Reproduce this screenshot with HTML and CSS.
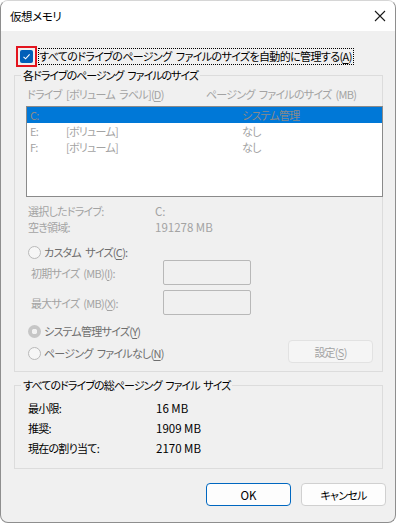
FILE: index.html
```html
<!DOCTYPE html>
<html lang="ja">
<head>
<meta charset="utf-8">
<title>仮想メモリ</title>
<link rel="stylesheet" href="styles.css">
</head>
<body>
<div class="window">
  <div class="titlebar">
    <span class="title">仮想メモリ</span>
    <svg class="close" width="12" height="12" viewBox="0 0 12 12"><path d="M1 1 L11 11 M11 1 L1 11" stroke="#1a1a1a" stroke-width="1.1" fill="none"/></svg>
  </div>
  <div class="content">
    <div class="auto-row">
      <span class="highlight"><span class="checkbox"><svg width="13" height="13" viewBox="0 0 13 13"><path d="M3.5 6.8 L5.6 8.8 L9.6 4.4" stroke="#fff" stroke-width="1.1" fill="none"/></svg></span></span>
      <span class="focus-label">すべてのドライブのページング ファイルのサイズを自動的に管理する(<u>A</u>)</span>
    </div>

    <div class="group g1">
      <div class="group-title">各ドライブのページング ファイルのサイズ</div>
      <div class="col-header">
        <span class="ch-drive">ドライブ</span>
        <span class="ch-label">[ボリューム ラベル](<u>D</u>)</span>
        <span class="ch-size">ページング ファイルのサイズ (MB)</span>
      </div>
      <div class="listbox">
        <div class="lrow selected"><span class="c1">C:</span><span class="c2"></span><span class="c3">システム管理</span></div>
        <div class="lrow"><span class="c1">E:</span><span class="c2">[ボリューム]</span><span class="c3">なし</span></div>
        <div class="lrow"><span class="c1">F:</span><span class="c2">[ボリューム]</span><span class="c3">なし</span></div>
      </div>
      <div class="info">
        <div class="irow"><span class="ik">選択したドライブ:</span><span class="num">C:</span></div>
        <div class="irow"><span class="ik">空き領域:</span><span class="num">191278 MB</span></div>
      </div>
      <div class="radio-row r-custom"><span class="radio"></span><span class="rlabel">カスタム サイズ(<u>C</u>):</span></div>
      <div class="field-row f-init"><span class="flabel">初期サイズ (MB)(<u>I</u>):</span><span class="input"></span></div>
      <div class="field-row f-max"><span class="flabel">最大サイズ (MB)(<u>X</u>):</span><span class="input"></span></div>
      <div class="radio-row r-sys"><span class="radio on"></span><span class="rlabel">システム管理サイズ(<u>Y</u>)</span></div>
      <div class="none-row">
        <div class="radio-row r-none"><span class="radio"></span><span class="rlabel">ページング ファイルなし(<u>N</u>)</span></div>
        <span class="btn disabled">設定(<u>S</u>)</span>
      </div>
    </div>

    <div class="group g2">
      <div class="group-title">すべてのドライブの総ページング ファイル サイズ</div>
      <div class="totals">
        <div class="trow"><span class="tk">最小限:</span><span class="num">16 MB</span></div>
        <div class="trow"><span class="tk">推奨:</span><span class="num">1909 MB</span></div>
        <div class="trow"><span class="tk">現在の割り当て:</span><span class="num">2170 MB</span></div>
      </div>
    </div>

    <div class="buttons">
      <span class="btn default num">OK</span>
      <span class="btn">キャンセル</span>
    </div>
  </div>
</div>
</body>
</html>
```

FILE: styles.css
```css
html, body {
  margin: 0;
  padding: 0;
  background: #ffffff;
}
body {
  font-family: "Noto Sans CJK JP", sans-serif;
  font-feature-settings: "palt";
  font-size: 11px;
  letter-spacing: -0.75px;
  word-spacing: 2.5px;
  color: #000;
}
u { text-underline-offset: 2px; }
.num { letter-spacing: 0; word-spacing: 0; font-size: 11.5px; }

.window {
  width: 396px;
  height: 523px;
  box-sizing: border-box;
  border: 1px solid #8e8e8e;
  border-top-color: #d6d6d6;
  border-radius: 8px;
  overflow: hidden;
  background: #f0f0f0;
  display: flex;
  flex-direction: column;
}

.titlebar {
  height: 30px;
  background: #ffffff;
  display: flex;
  align-items: center;
  justify-content: space-between;
  padding: 0 9px 0 9px;
  flex: none;
}
.title { line-height: 30px; font-size: 11.5px; letter-spacing: -0.4px; }

.content {
  display: flex;
  flex-direction: column;
  padding: 0 9px 0 12px;
}

/* auto-manage row */
.auto-row {
  margin-top: 15px;
  height: 21px;
  display: flex;
  align-items: flex-start;
}
.highlight {
  margin-left: 3px;
  width: 21px;
  height: 21px;
  box-sizing: border-box;
  border: 2px solid #e3141e;
  display: flex;
  align-items: center;
  justify-content: center;
}
.checkbox {
  width: 13px;
  height: 13px;
  background: #005fb8;
  border-radius: 2px;
  display: block;
}
.checkbox svg { display: block; }
.focus-label {
  margin-top: 2px;
  margin-left: 1px;
  height: 17px;
  box-sizing: border-box;
  border: 1px dotted #000;
  line-height: 15px;
  padding: 0 1px 0 0;
  white-space: nowrap;
  letter-spacing: -0.62px;
}

/* group boxes */
.group {
  border: 1px solid #dcdcdc;
  display: flex;
  flex-direction: column;
  margin-left: 1px;
  width: 369px;
  box-sizing: border-box;
}
.group-title {
  margin: -9px 0 0 6px;
  padding: 0 2px;
  background: #f0f0f0;
  line-height: 16px;
  width: fit-content;
  white-space: nowrap;
}
.g1 { margin-top: 8px; padding-bottom: 8px; }
.g2 { margin-top: 13px; padding-bottom: 10px; }
.g1 .group-title { letter-spacing: -1px; }
.g2 .group-title { letter-spacing: -0.9px; word-spacing: 2px; }

.col-header {
  margin-top: 3px;
  height: 16px;
  line-height: 16px;
  color: #a3a3a3;
  display: flex;
  white-space: nowrap;
}
.ch-drive { margin-left: 12px; width: 39px; }
.ch-label { width: 140px; }

.listbox {
  margin-top: 4px;
  margin-left: 11px;
  margin-right: -1px;
  height: 91px;
  box-sizing: border-box;
  border: 1px solid #8a8a8a;
  background: #ffffff;
  display: flex;
  flex-direction: column;
}
.lrow {
  height: 16px;
  line-height: 16px;
  display: flex;
  color: #a3a3a3;
  white-space: nowrap;
}
.lrow.selected { background: #0078d7; color: #8a8a8a; }
.c1 { margin-left: 3px; width: 36px; }
.c2 { width: 176px; }

.info {
  margin-top: 6px;
  display: flex;
  flex-direction: column;
  color: #a3a3a3;
}
.irow {
  height: 16px;
  line-height: 16px;
  display: flex;
  white-space: nowrap;
}
.ik { margin-left: 13px; width: 127px; }

.radio-row {
  height: 16px;
  display: flex;
  align-items: center;
  color: #6e6e6e;
  white-space: nowrap;
}
.r-custom { margin-top: 9px; }
.r-sys { margin-top: 8px; }
.radio {
  margin-left: 13px;
  width: 13px;
  height: 13px;
  box-sizing: border-box;
  border: 1px solid #b9b9b9;
  border-radius: 50%;
  background: #f6f6f6;
  flex: none;
}
.radio.on {
  border: none;
  background: radial-gradient(circle, #f2f2f2 0 2.6px, #c6c6c6 3px);
}
.rlabel { margin-left: 3px; line-height: 16px; }

.field-row {
  height: 25px;
  display: flex;
  align-items: center;
  color: #a3a3a3;
  white-space: nowrap;
}
.f-max { margin-top: 5px; }
.flabel { margin-left: 16px; width: 132px; line-height: 16px; }
.input {
  width: 88px;
  height: 25px;
  box-sizing: border-box;
  border: 1px solid #b8b8b8;
  border-radius: 2px;
}

.none-row {
  margin-top: 1px;
  height: 23px;
  display: flex;
  justify-content: space-between;
  align-items: flex-start;
}
.r-none { margin-top: 5px; }

.btn {
  width: 85px;
  height: 23px;
  box-sizing: border-box;
  border: 1px solid #d0d0d0;
  border-radius: 4px;
  background: #fdfdfd;
  display: flex;
  align-items: center;
  justify-content: center;
  line-height: 16px;
  white-space: nowrap;
}
.btn.disabled {
  margin-right: 9px;
  background: #f5f5f5;
  border-color: #e2e2e2;
  color: #a3a3a3;
}
.btn.default { border-color: #0067c0; }

.totals {
  margin-top: 5px;
  display: flex;
  flex-direction: column;
}
.trow {
  height: 20px;
  line-height: 20px;
  display: flex;
  white-space: nowrap;
}
.tk { margin-left: 13px; width: 128px; }

.buttons {
  margin-top: 14px;
  display: flex;
  justify-content: flex-end;
  gap: 10px;
}
```
